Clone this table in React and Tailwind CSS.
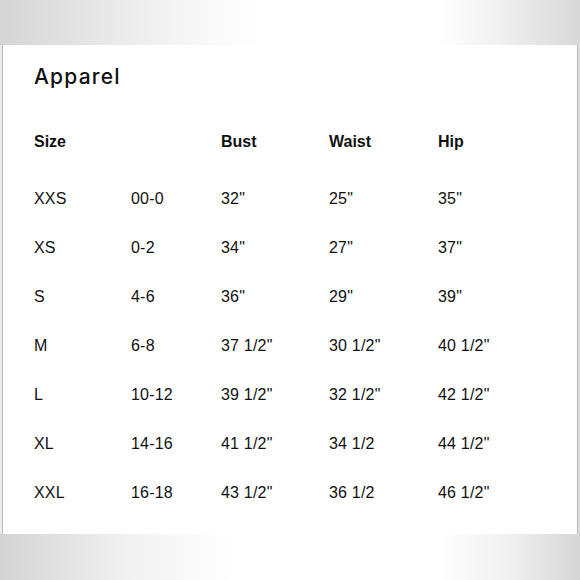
import React from 'react';

const rows = [
  ['XXS', '00-0', '32"', '25"', '35"'],
  ['XS', '0-2', '34"', '27"', '37"'],
  ['S', '4-6', '36"', '29"', '39"'],
  ['M', '6-8', '37 1/2"', '30 1/2"', '40 1/2"'],
  ['L', '10-12', '39 1/2"', '32 1/2"', '42 1/2"'],
  ['XL', '14-16', '41 1/2"', '34 1/2', '44 1/2"'],
  ['XXL', '16-18', '43 1/2"', '36 1/2', '46 1/2"'],
];

const cols = 'grid grid-cols-[97px_90px_108px_109px_1fr]';

const App = () => {
  return (
    <div className="w-[580px] h-[580px] flex flex-col bg-white text-[#111] font-['Liberation_Sans',Arial,sans-serif]">
      {/* top band */}
      <div className="h-[45px] bg-[linear-gradient(to_right,#d5d5d5,#f4f4f4_30%,#fff_45%,#fff_75%,#f2f2f2_85%,#d8d8d8)]" />

      <div className="flex flex-1">
        <div className="w-[2px] bg-[#ececec]" />
        <div className="flex-1 flex flex-col bg-white border-x border-[#b9b9b9] pl-[31px] pt-[18px]">
          <h1 className="text-[21px] leading-[28px] tracking-[1.2px] font-medium font-['Inter',sans-serif] text-[#111]">
            Apparel
          </h1>

          <div className={`${cols} mt-[26px] h-[49px] items-center font-bold text-[16px] mb-[8px]`}>
            <span>Size</span>
            <span />
            <span>Bust</span>
            <span>Waist</span>
            <span>Hip</span>
          </div>

          {rows.map((r) => (
            <div key={r[0]} className={`${cols} h-[49px] items-center text-[16px] tracking-[0.2px]`}>
              {r.map((c, i) => (
                <span key={i}>{c}</span>
              ))}
            </div>
          ))}
        </div>
        <div className="w-[2px] bg-[#dcdcdc]" />
      </div>

      {/* bottom band */}
      <div className="h-[46px] bg-[linear-gradient(to_right,#d3d3d3,#f1f1f1_22%,#fff_40%,#fff_75%,#f0f0f0_88%,#d6d6d6)]" />
    </div>
  );
};

export default App;
